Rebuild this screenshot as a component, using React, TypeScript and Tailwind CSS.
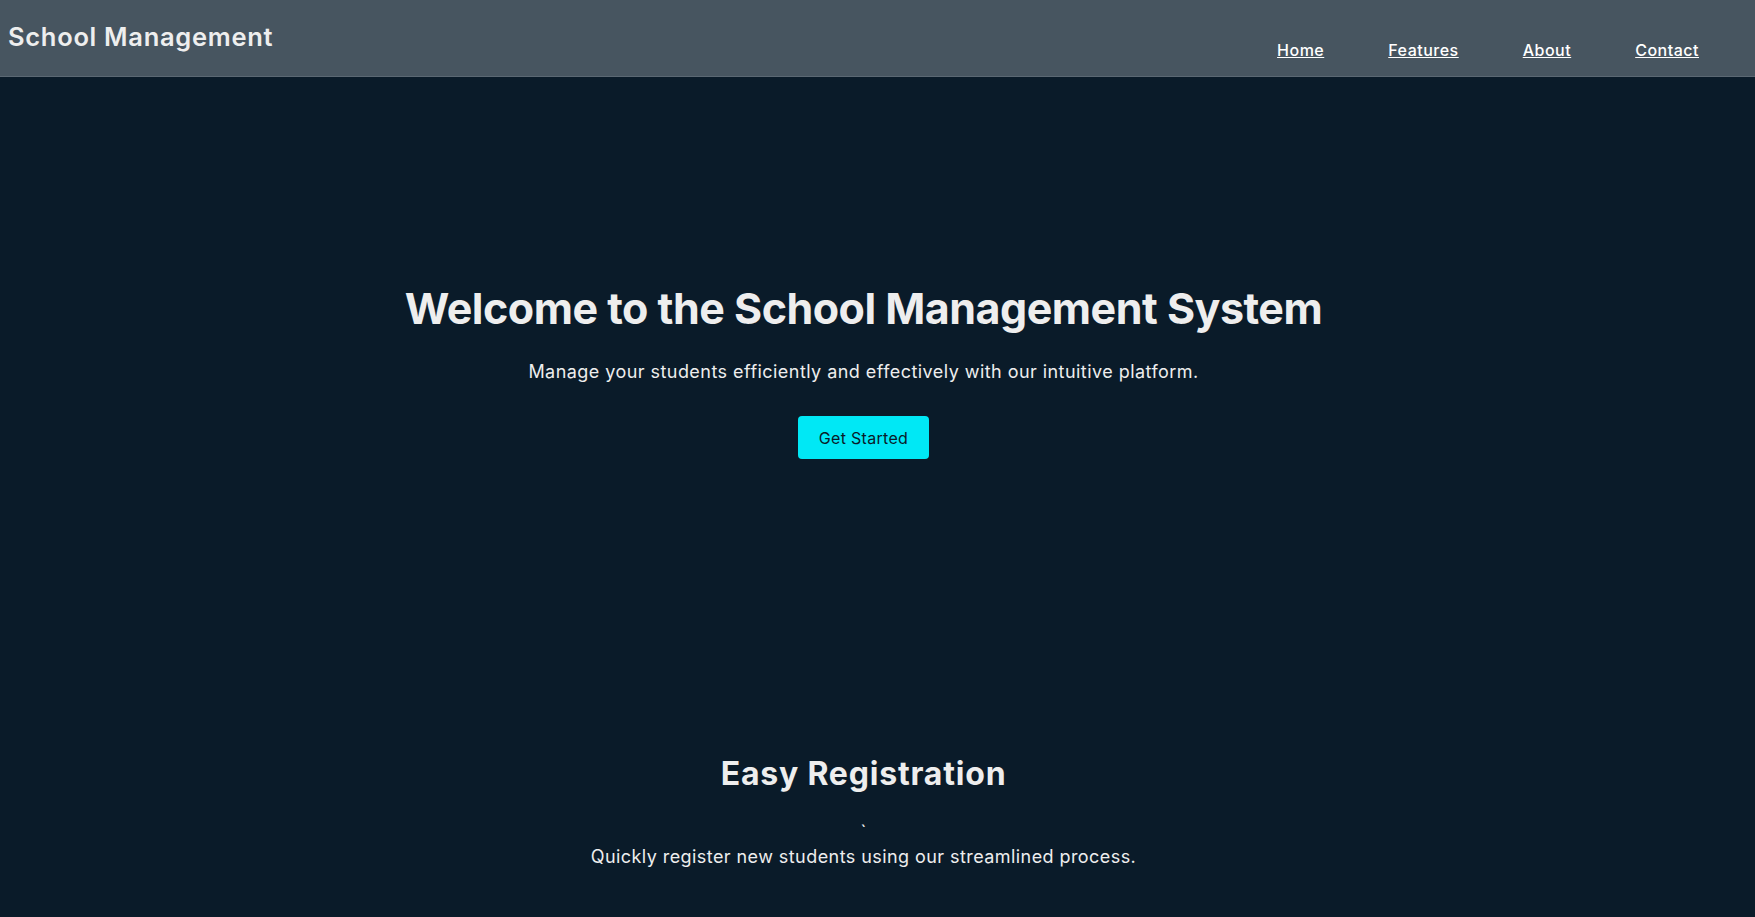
import React from 'react';

const font = { fontFamily: 'Inter, "Noto Sans", sans-serif' };

const App: React.FC = () => {
  return (
    <div className="min-h-[917px] bg-[#0a1b29] text-[#eeeeee]" style={font}>
      <header className="flex h-[77px] items-start justify-between border-b border-[#5b6873] bg-[#475560] pl-2 pr-14">
        <h1 className="pt-[21px] text-[25.5px] font-semibold leading-[32px] tracking-[0.7px] text-[#eeeeee]">School Management</h1>
        <nav className="pt-[38px]">
          <ul className="flex gap-16">
            <li><a href="#" className="text-[16px] font-medium leading-[20px] tracking-[0.5px] text-white underline">Home</a></li>
            <li><a href="#" className="text-[16px] font-medium leading-[20px] tracking-[0.5px] text-white underline">Features</a></li>
            <li><a href="#" className="text-[16px] font-medium leading-[20px] tracking-[0.5px] text-white underline">About</a></li>
            <li><a href="#" className="text-[16px] font-medium leading-[20px] tracking-[0.5px] text-white underline">Contact</a></li>
          </ul>
        </nav>
      </header>

      <section className="flex flex-col items-center pr-[28px] pt-[203px] text-center">
        <h2 className="text-[43px] font-bold leading-[56px] tracking-[-0.5px]">Welcome to the School Management System</h2>
        <p className="mt-[22px] text-[18px] leading-[28px] tracking-[0.45px]">Manage your students efficiently and effectively with our intuitive platform.</p>
        <button className="mt-[30px] h-[43px] w-[131px] rounded-[4px] bg-[#00e8f5] text-[16px] tracking-[0.3px] text-[#0a1b29]">Get Started</button>
      </section>

      <section className="flex flex-col items-center pr-[28px] pt-[295px] text-center">
        <h3 className="text-[32px] font-bold leading-[40px] tracking-[0.8px]">Easy Registration</h3>
        <span className="mt-[28px] text-[18px] leading-[20px]">`</span>
        <p className="mt-[1px] text-[18px] leading-[28px] tracking-[0.43px]">Quickly register new students using our streamlined process.</p>
      </section>
    </div>
  );
};

export default App;
